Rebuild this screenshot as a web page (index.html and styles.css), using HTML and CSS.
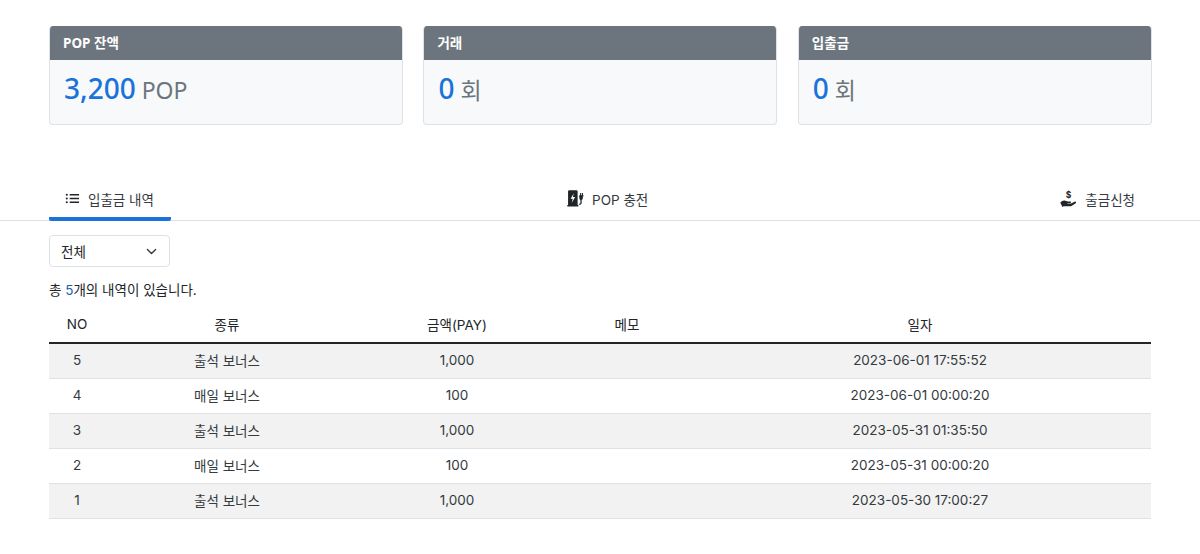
FILE: index.html
```html
<!DOCTYPE html>
<html lang="ko">

<head>
    <meta charset="UTF-8">
    <meta name="viewport" content="width=device-width, initial-scale=1.0">
    <title>POP</title>
    <link rel="stylesheet" href="styles.css">
</head>

<body>
    <div class="cards">
        <div class="card">
            <div class="card-header">POP 잔액</div>
            <div class="card-body"><span class="num">3,200</span> POP</div>
        </div>
        <div class="card">
            <div class="card-header">거래</div>
            <div class="card-body"><span class="num">0</span> 회</div>
        </div>
        <div class="card">
            <div class="card-header">입출금</div>
            <div class="card-body"><span class="num">0</span> 회</div>
        </div>
    </div>

    <div class="tabs">
        <div class="tabs-inner">
            <a class="tab active">
                <svg class="icon" viewBox="0 0 16 16" fill="#212529">
                    <path d="M5 3.250h10v1.500H5zM5 7.250h10v1.500H5zM5 11.250h10v1.500H5z" />
                    <circle cx="1.900" cy="4" r="1.100" />
                    <circle cx="1.900" cy="8" r="1.100" />
                    <circle cx="1.900" cy="12" r="1.100" />
                </svg>
                입출금 내역
            </a>
            <a class="tab">
                <svg class="icon icon-wide" viewBox="0 0 16 16" fill="#212529">
                    <path fill-rule="evenodd" d="M1 1.500A1.200 1.200 0 0 1 2.200.300h6.600A1.200 1.200 0 0 1 10 1.500V14h.7v1.500H.3V14H1zM6.400 3 3.400 8.300h2l-.9 3.700 3.200-5.400H5.500z" />
                    <path d="M11.800 5h3.700v1.200h-.6v1.600a1.600 1.600 0 0 1-1.100 1.500v2.900a1.800 1.800 0 0 1-2.700 1.500l.6-1.100a.6.600 0 0 0 .9-.4V9.300a1.600 1.600 0 0 1-1-1.500V6.200h-.6zM12.300 2.800h1V5h-1zM14 2.800h1V5h-1z" />
                </svg>
                POP 충전
            </a>
            <a class="tab">
                <svg class="icon icon-wide" viewBox="0 0 16 16" fill="#212529">
                    <path d="M.3 12c1.500-1.900 3-2.400 4.600-1.900l2.600.8h2.300c.8 0 .8 1.300 0 1.300H7v.5h3.400l3.300-1.700c1-.5 2 .7 1.100 1.400l-3.600 2.500c-.4.3-.8.4-1.300.4H3.500l-1.200.7z" />
                    <text x="8" y="7.500" class="dollar" text-anchor="middle">$</text>
                </svg>
                출금신청
            </a>
        </div>
    </div>

    <div class="content">
        <div class="select">
            전체
            <svg class="chevron" viewBox="0 0 16 16">
                <path d="M2 5l6 6 6-6" fill="none" stroke="#343a40" stroke-width="2" stroke-linecap="round" stroke-linejoin="round" />
            </svg>
        </div>

        <p class="count">총 <span class="count-num">5</span>개의 내역이 있습니다.</p>

        <table class="history">
            <colgroup>
                <col class="col-no">
                <col class="col-type">
                <col class="col-amount">
                <col class="col-memo">
                <col>
            </colgroup>
            <thead>
                <tr>
                    <th>NO</th>
                    <th>종류</th>
                    <th>금액(PAY)</th>
                    <th>메모</th>
                    <th>일자</th>
                </tr>
            </thead>
            <tbody>
                <tr>
                    <td>5</td>
                    <td>출석 보너스</td>
                    <td>1,000</td>
                    <td></td>
                    <td>2023-06-01 17:55:52</td>
                </tr>
                <tr>
                    <td>4</td>
                    <td>매일 보너스</td>
                    <td>100</td>
                    <td></td>
                    <td>2023-06-01 00:00:20</td>
                </tr>
                <tr>
                    <td>3</td>
                    <td>출석 보너스</td>
                    <td>1,000</td>
                    <td></td>
                    <td>2023-05-31 01:35:50</td>
                </tr>
                <tr>
                    <td>2</td>
                    <td>매일 보너스</td>
                    <td>100</td>
                    <td></td>
                    <td>2023-05-31 00:00:20</td>
                </tr>
                <tr>
                    <td>1</td>
                    <td>출석 보너스</td>
                    <td>1,000</td>
                    <td></td>
                    <td>2023-05-30 17:00:27</td>
                </tr>
            </tbody>
        </table>
    </div>
</body>

</html>
```

FILE: styles.css
```css
* {
    box-sizing: border-box;
}

body {
    margin: 0;
    padding-top: 26px;
    font-family: Inter, "Noto Sans CJK KR", sans-serif;
    font-size: 13.5px;
    color: #212529;
    background-color: #fff;
}

.cards {
    display: grid;
    grid-template-columns: repeat(3, 1fr);
    gap: 20.4px;
    margin: 0 48.2px 0 49px;
    font-family: "Noto Sans", "Noto Sans CJK KR", sans-serif;
}

.card {
    height: 99px;
    background-color: #f8f9fa;
    border: 1px solid #dee2e6;
    border-top: none;
    border-radius: 4px;
    overflow: hidden;
}

.card-header {
    height: 34px;
    margin: 0 -1px;
    padding-left: 14px;
    background-color: #6c757d;
    color: #fff;
    font-size: 13.5px;
    font-weight: 700;
    line-height: 34px;
}

.card-body {
    padding-left: 14px;
    font-size: 23px;
    line-height: 57px;
    color: #6c757d;
}

.num {
    font-size: 28px;
    font-weight: 500;
    color: #1a73d9;
}

.tabs {
    margin-top: 55px;
    border-bottom: 1px solid #dee2e6;
}

.tabs-inner {
    display: flex;
    justify-content: space-between;
    margin: 0 49px;
}

.tab {
    display: flex;
    align-items: center;
    gap: 8px;
    height: 41px;
    margin-bottom: -1px;
    padding: 0 16px;
    border-bottom: 4px solid transparent;
    color: #343a40;
}

.tab.active {
    width: 122px;
    border-bottom-color: #1a73d9;
    border-radius: 0 0 2px 2px;
}

.icon {
    width: 15px;
    height: 15px;
    flex: none;
}

.icon-wide {
    width: 17px;
    height: 17px;
}

.dollar {
    font-size: 8px;
    font-weight: 700;
}

.content {
    margin: 14px 49px 0;
}

.select {
    display: flex;
    align-items: center;
    justify-content: space-between;
    width: 121px;
    height: 32px;
    padding: 0 12px 0 11px;
    border: 1px solid #dee2e6;
    border-radius: 4px;
}

.chevron {
    width: 11px;
    height: 11px;
}

.count {
    margin: 14px 0 0;
    line-height: 18px;
}

.count-num {
    color: #1a5fb4;
}

.history {
    width: 100%;
    margin-top: 15px;
    border-collapse: collapse;
    table-layout: fixed;
}

.col-no {
    width: 56px;
}

.col-type {
    width: 244px;
}

.col-amount {
    width: 216px;
}

.col-memo {
    width: 124px;
}

.history th {
    height: 26px;
    padding: 0 0 8px;
    border-bottom: 2px solid #212529;
    font-weight: 400;
    text-align: center;
}

.history td {
    height: 35px;
    padding: 0 0 2px;
    border-bottom: 1px solid #dee2e6;
    text-align: center;
    color: #343a40;
}

.history tbody tr:nth-child(odd) {
    background-color: #f2f2f2;
}
```
